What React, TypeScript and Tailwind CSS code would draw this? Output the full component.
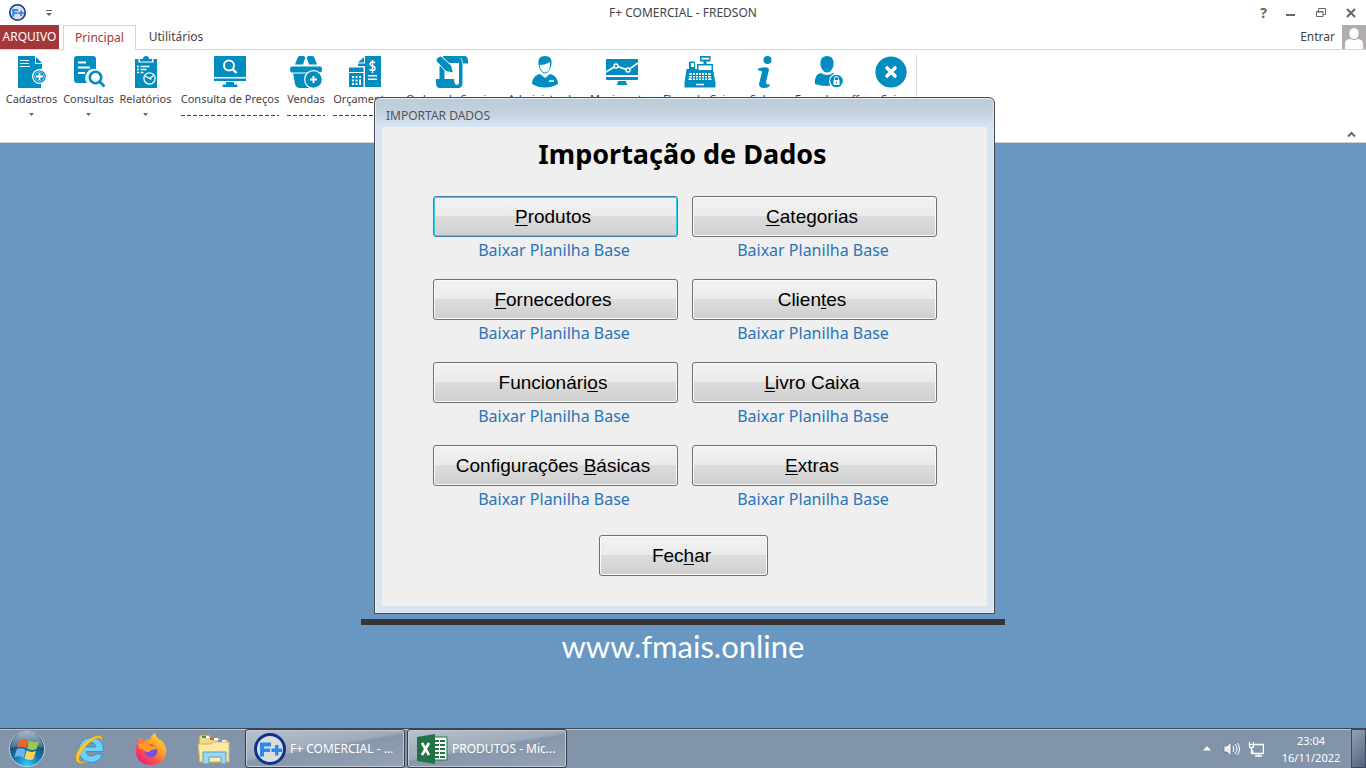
import type { ReactNode } from 'react';

const BLUE = '#028dc0';

function Icon({ children }: { children: ReactNode }) {
  return (
    <svg viewBox="0 0 32 32" className="size-8 shrink-0" fill={BLUE} aria-hidden="true">
      {children}
    </svg>
  );
}

const icons = {
  register: (
    <Icon>
      <path d="M2 0h17v8h7v4.500a7 7 0 0 0-1 13.500V32H2z" />
      <path d="M20 1l6 6h-6z" />
      <path d="M4 4.500h9M4 7.500h9M4 10.500h10" stroke="#fff" />
      <circle cx="23.500" cy="20.500" r="7.500" fill="#fff" />
      <circle cx="23.500" cy="20.500" r="6.300" />
      <circle cx="23.500" cy="20.500" r="4.700" fill="none" stroke="#fff" strokeWidth=".6" />
      <path d="M23.500 17v7M20 20.500h7" stroke="#fff" strokeWidth="1.800" />
    </Icon>
  ),
  search: (
    <Icon>
      <path d="M4 0h16q3 0 3 3v10a9 9 0 0 0-9 14H4q-3 0-3-3V3q0-3 3-3z" />
      <path d="M5 6.500h8M5 11.500h12M5 17h7" stroke="#fff" strokeWidth="2" />
      <circle cx="22.500" cy="21.500" r="8.500" fill="#fff" />
      <circle cx="22.500" cy="21.500" r="5.700" fill="none" stroke={BLUE} strokeWidth="2.600" />
      <path d="M26.500 25.500l5 5" stroke={BLUE} strokeWidth="3" />
    </Icon>
  ),
  report: (
    <Icon>
      <path d="M5 3h3.500v3.500h15V3H27v29H5z" />
      <path d="M10 5.500V3h3q0-3 3-3t3 3h3v2.500z" />
      <path d="M7 10.500h2M7 13.500h2M7 16.500h2M10.500 10.500h9M10.500 13.500h6M10.500 16.500h3" stroke="#fff" strokeWidth="1.400" />
      <circle cx="19.500" cy="22.500" r="5.600" fill={BLUE} stroke="#fff" strokeWidth="1.300" />
      <path d="M15 20l4.500 2.500 4-3M19.500 22.500l2 .5" stroke="#fff" fill="none" strokeWidth="1.300" />
    </Icon>
  ),
  monitor: (
    <Icon>
      <path d="M1 0h30q1 0 1 1v20H0V1q0-1 1-1zM0 22.500h32V25H0zM12 26h8v2.500h3q.5 0 .5 2.500h-15q0-2.500.5-2.500h3z" />
      <circle cx="15" cy="9.500" r="5" fill="none" stroke="#fff" strokeWidth="2" />
      <path d="M18.500 13l4 4" stroke="#fff" strokeWidth="2.400" />
    </Icon>
  ),
  basket: (
    <Icon>
      <path d="M9.500 0H13q2.500 0 2 2.500L13 8.500H5L7.500 2Q8 0 9.500 0zM22.500 0H19q-2.500 0-2 2.500l2 6h8L24.500 2Q24 0 22.500 0z" />
      <path d="M2 10.500h28q2 0 2 3t-2 3H2q-2 0-2-3t2-3z" />
      <path d="M3 17.500h26V32H10q-4 0-5-4z" />
      <circle cx="23.500" cy="23.500" r="9.500" fill="#fff" />
      <circle cx="23.500" cy="23.500" r="8.300" />
      <path d="M23.500 20v7M20 23.500h7" stroke="#fff" strokeWidth="2" />
    </Icon>
  ),
  budget: (
    <Icon>
      <path d="M16 0h16v31H16V10H9V7.500h7zM9 6.500L15 1v5.500zM0 11.500h14.500V16H0zM0 17h14.500v14H0z" />
      <path d="M3 20h2v2H3zM6.500 20h2v2h-2zM10 20h2v2h-2zM3 23.500h2v2H3zM6.500 23.500h2v2h-2zM10 23.500h2v5.500h-2zM3 27h2v2H3zM6.500 27h2v2h-2zM19 19h9v1.500h-9zM19 22.500h9V24h-9z" fill="#fff" />
      <path d="M26 7q-1-1.500-2.800-1.200T21 8q0 1.500 2.500 2t2.500 2.500-2.500 2T20.700 13M23.500 4v13" fill="none" stroke="#fff" strokeWidth="1.400" />
    </Icon>
  ),
  scroll: (
    <Icon>
      <path d="M7 0h21q4 0 4 5v2.500h-5.500V27q0 5-4.500 5H4q-4 0-4-5v-4h3.500V10h5v13H18q0 5 2.500 6 2.500 0 2.500-3V7H7z" />
      <path d="M24.500 2Q26.500 3 26.500 7.500" fill="none" stroke="#fff" strokeWidth=".7" />
      <path d="M0 5q0-4 5-5l10.500 9.500 2 7.500-7.500-1.500z" stroke="#fff" strokeWidth="1" />
    </Icon>
  ),
  user: (
    <Icon>
      <path d="M16 0c5 0 7 3 6.500 7.500C22 13 19 17.500 16 17.500S10 13 9.500 7.500C9 3 11 0 16 0z" />
      <path d="M10.700 9q6 0 10-3 1 6-1.500 9-3.200 3-6.200 0-2.300-3-2.300-6z" fill="#fff" />
      <path d="M11 18l5 4 5-4c5 1 8 5 8 10q-6 3.500-13 3.500T3 28c0-5 3-9 8-10z" />
      <path d="M20 25h5" stroke="#fff" strokeWidth="1.500" />
    </Icon>
  ),
  chart: (
    <Icon>
      <path d="M1 3h30q1 0 1 1v15H0V4q0-1 1-1zM0 21h32v2q0 1-1 1H1q-1 0-1-1zM12 25h8q0 3 2 4H10q2-1 2-4z" />
      <path d="M0 16l10-6 12 4 10-7" fill="none" stroke="#fff" strokeWidth="1.600" />
      <circle cx="10" cy="10" r="2" stroke="#fff" strokeWidth="1.400" />
      <circle cx="22" cy="14" r="2" stroke="#fff" strokeWidth="1.400" />
    </Icon>
  ),
  cashier: (
    <Icon>
      <path d="M2.500 13H5V6.500q0-1 1-1h4q1 0 1 1V13h2V8h16v5.500L31.500 27v4.500H.5V27zM16 0h10.500v5.500H22.500V8h-3V5.500H16z" />
      <path d="M17.500 1.800h7.500v1.700h-7.500zM14.500 9.500h13V14h-13z" fill="#fff" />
      <path d="M5.500 17h21l1 7h-23zM7 7h3v4H7z" fill="#fff" />
      <path d="M8.500 17v7M11.500 17v7M14.500 17v7M17.500 17v7M20.500 17v7M23.500 17v7M5 19.500h22M5 22h22" fill="none" stroke={BLUE} strokeWidth="1" />
      <path d="M12 28.500h8" stroke="#fff" strokeWidth="1.500" />
    </Icon>
  ),
  info: (
    <Icon>
      <circle cx="18.500" cy="4" r="4" />
      <path d="M9 12.500q10-3 11 1l-3 13q0 3 4 1.500 0 4-6 4-5 0-5-4l3-12q0-2-4-1.500z" />
    </Icon>
  ),
  lock: (
    <Icon>
      <path d="M16 0c5 0 7 4 6.500 8.500S19 16.500 16 16.500 10 13 9.500 8.500 11 0 16 0z" />
      <path d="M10 17q6 4 12 0l7 5v5q-6 3-13 3T4 28q-1-10 6-11z" />
      <circle cx="25.500" cy="25" r="7.500" fill="#fff" />
      <circle cx="25.500" cy="25" r="6.300" />
      <path d="M22.500 24h6v5h-6z" fill="#fff" />
      <path d="M23.500 24v-1.500a2 2 0 0 1 4 0V24" fill="none" stroke="#fff" />
      <path d="M25.500 25.500v2" stroke={BLUE} />
    </Icon>
  ),
  close: (
    <Icon>
      <circle cx="16" cy="16" r="15.600" />
      <path d="M12 12l8 8M20 12l-8 8" stroke="#fff" strokeWidth="3.600" strokeLinecap="round" />
    </Icon>
  ),
};

type Tool = { label: string; width: string; icon: ReactNode; mark?: 'arrow' | 'dash' };

const tools: Tool[] = [
  { label: 'Cadastros', width: 'w-[57px]', icon: icons.register, mark: 'arrow' },
  { label: 'Consultas', width: 'w-[57px]', icon: icons.search, mark: 'arrow' },
  { label: 'Relatórios', width: 'w-[57px]', icon: icons.report, mark: 'arrow' },
  { label: 'Consulta de Preços', width: 'w-28', icon: icons.monitor, mark: 'dash' },
  { label: 'Vendas', width: 'w-10', icon: icons.basket, mark: 'dash' },
  { label: 'Orçamentos', width: 'w-[78px]', icon: icons.budget, mark: 'dash' },
  { label: 'Ordem de Serviço', width: 'w-24', icon: icons.scroll },
  { label: 'Administrador', width: 'w-[90px]', icon: icons.user },
  { label: 'Movimentos', width: 'w-16', icon: icons.chart },
  { label: 'Fluxo de Caixa', width: 'w-[92px]', icon: icons.cashier },
  { label: 'Sobre', width: 'w-[38px]', icon: icons.info },
  { label: 'Fazer Logoff', width: 'w-[86px]', icon: icons.lock },
  { label: 'Sair', width: 'w-[42px]', icon: icons.close },
];

function Logo({ className }: { className: string }) {
  return (
    <svg viewBox="0 0 32 32" className={className} aria-hidden="true">
      <circle cx="16" cy="16" r="14.500" fill="#dcdde0" stroke="#0c3391" strokeWidth="3" />
      <path d="M6 9.500h11v4h-7v2h6V19h-6v4.500H6zM21 12h3.500v3.500H28V19h-3.500v3.500H21V19h-3.500v-3.500H21z" fill="#2c8be8" />
    </svg>
  );
}

function WinButton({ text, mnemonic, focused, className }: { text: string; mnemonic: number; focused?: boolean; className: string }) {
  const frame = focused
    ? 'border-[#3c7fb1] shadow-[inset_0_0_0_1px_#35d0f5]'
    : 'border-[#707070] shadow-[inset_0_0_0_1px_#fafafa]';
  return (
    <button
      type="button"
      className={`h-[41px] rounded-[3px] border bg-[linear-gradient(#f2f2f2,#ebebeb_48%,#dddddd_48%,#cfcfcf)] pr-1 font-['Liberation_Sans',Arial,sans-serif] text-[19px] leading-6 text-black ${frame} ${className}`}
    >
      {text.slice(0, mnemonic)}
      <span className="underline decoration-1 underline-offset-2">{text[mnemonic]}</span>
      {text.slice(mnemonic + 1)}
    </button>
  );
}

const imports: [string, number][] = [
  ['Produtos', 0],
  ['Categorias', 0],
  ['Fornecedores', 0],
  ['Clientes', 5],
  ['Funcionários', 10],
  ['Livro Caixa', 0],
  ['Configurações Básicas', 14],
  ['Extras', 0],
];

function ImportDialog() {
  return (
    <div role="dialog" aria-labelledby="dialog-title" className="w-[621px] rounded-t-md border border-[#45484b] bg-[#d7e4f2] bg-[linear-gradient(#bccbdb,#c4d0dc_14px,#d7e4f2_29px)] px-[7px] pb-[7px] shadow-[inset_0_0_0_1px_#e6eef7]">
      <div id="dialog-title" className="flex h-[29px] items-center px-1 pt-1.5 text-[12px] text-[#4c5560]">IMPORTAR DADOS</div>
      <div className="flex flex-col items-center bg-[#efefef] pt-[9px] pb-[30px]">
        <h1 className="pr-1 text-[27px] leading-9 font-bold text-black">Importação de Dados</h1>
        <div className="mt-6 grid grid-cols-2 gap-x-3.5">
          {imports.map(([text, mnemonic], i) => (
            <div key={text} className="flex h-[83px] flex-col items-center">
              <WinButton text={text} mnemonic={mnemonic} focused={i === 0} className="w-[245px]" />
              <a href="#planilha" className="pr-0.5 text-[16px] leading-[26px] text-[#2b73b9]">Baixar Planilha Base</a>
            </div>
          ))}
        </div>
        <WinButton text="Fechar" mnemonic={3} className="mt-[7px] mr-0.5 w-[169px]" />
      </div>
    </div>
  );
}

function Ribbon() {
  return (
    <header className="bg-white text-[#444]">
      <div className="grid h-[25px] grid-cols-3 items-center">
        <div className="flex items-center gap-5 pl-[9px]">
          <Logo className="size-[17px]" />
          <button type="button" aria-label="Personalizar">
            <svg viewBox="0 0 6 6" className="size-1.5" fill="#666"><path d="M0 0h6v1H0zM0 3h6L3 6z" /></svg>
          </button>
        </div>
        <div className="text-center text-[12px]">F+ COMERCIAL - FREDSON</div>
        <div className="flex items-center justify-end gap-[18px] pr-[9px]">
          <button type="button" aria-label="Ajuda" className="text-[14px] leading-4 font-bold text-[#666]">?</button>
          <button type="button" aria-label="Minimizar"><svg viewBox="0 0 12 12" className="size-3"><path d="M1 7h9v2H1z" fill="#666" /></svg></button>
          <button type="button" aria-label="Restaurar"><svg viewBox="0 0 12 12" className="size-3" fill="none" stroke="#666"><path d="M3.500 4V1.500h7v6H8M1.500 4.500H8v5H1.500zM1 5h7" /></svg></button>
          <button type="button" aria-label="Fechar janela"><svg viewBox="0 0 12 12" className="size-3"><path d="M2 2l8 8M10 2l-8 8" stroke="#666" strokeWidth="2" /></svg></button>
        </div>
      </div>
      <nav className="flex h-[25px] items-stretch border-b border-[#d4d4d4] text-[12px]">
        <button type="button" className="w-[59px] bg-[#a4373a] text-white">ARQUIVO</button>
        <button type="button" className="-mb-px ml-1 w-[73px] border border-b-0 border-[#d4d4d4] bg-white text-[#a4373a]">Principal</button>
        <button type="button" className="w-20">Utilitários</button>
        <button type="button" className="ml-auto flex items-center gap-[7px]">
          Entrar
          <svg viewBox="0 0 24 24" className="size-6" aria-hidden="true">
            <path d="M0 0h24v24H0z" fill="#b1adad" />
            <ellipse cx="12" cy="8.500" rx="4.700" ry="5.500" fill="#fff" />
            <path d="M3 24v-5q0-5 6-5 3 2.500 6 0 6 0 6 5v5z" fill="#fff" />
          </svg>
        </button>
      </nav>
      <div className="flex h-[93px] items-stretch border-b border-[#d4d4d4] pl-[3px]">
        {tools.map((tool) => (
          <button key={tool.label} type="button" className={`flex shrink-0 flex-col items-center pt-1.5 text-[11px] leading-4 whitespace-nowrap ${tool.width}`}>
            {tool.icon}
            <span className="mt-[3px] flex flex-col items-stretch">
              {tool.label}
              {tool.mark === 'dash' && (
                <span className="mt-2 h-px bg-[repeating-linear-gradient(90deg,#444_0_4px,transparent_4px_6px)]" />
              )}
            </span>
            {tool.mark === 'arrow' && (
              <svg viewBox="0 0 5 3" className="mt-1.5 h-[3px] w-[5px]" fill="#666"><path d="M0 0h5L2.500 3z" /></svg>
            )}
          </button>
        ))}
        <div className="mt-1 mb-2 ml-1 w-px bg-[#dcdcdc]" />
        <button type="button" aria-label="Recolher faixa" className="mt-auto mr-[10px] mb-1 ml-auto">
          <svg viewBox="0 0 9 7" className="h-[7px] w-[9px]"><path d="M1 5.500L4.500 2 8 5.500" fill="none" stroke="#666" strokeWidth="2" /></svg>
        </button>
      </div>
    </header>
  );
}

function Task({ icon, label }: { icon: ReactNode; label: string }) {
  return (
    <button type="button" className="flex h-[39px] w-40 items-center gap-1 rounded-[3px] border border-[#343f4c] bg-[linear-gradient(170deg,#bac3ce,#9eabba_45%,#8797aa_50%,#94a3b5)] pl-2 text-[12px] text-white shadow-[inset_0_0_0_1px_#c3ccd6]">
      {icon}
      {label}
    </button>
  );
}

function Taskbar() {
  return (
    <footer className="flex h-10 items-center border-t border-[#3d4854] bg-[#8294aa] text-white shadow-[inset_0_1px_0_#b9c8d6]">
      <button type="button" aria-label="Iniciar" className="ml-2">
        <svg viewBox="0 0 38 38" className="size-[38px]">
          <defs>
            <radialGradient id="orb" cx=".5" cy=".95" r=".85">
              <stop offset="0" stopColor="#25d1ff" /><stop offset=".45" stopColor="#1674ac" /><stop offset="1" stopColor="#143653" />
            </radialGradient>
            <linearGradient id="gloss" x2="0" y2="1"><stop stopColor="#d4e2ea" /><stop offset="1" stopColor="#547892" /></linearGradient>
          </defs>
          <circle cx="19" cy="19" r="17.500" fill="url(#orb)" stroke="#b5d5e6" />
          <path d="M3 18a16 16 0 0 1 32 0q-16-6-32 0z" fill="url(#gloss)" opacity=".75" />
          <path d="M11 11q4-4 9-1l-2 8.500q-4-3-9-.5z" fill="#eb6530" />
          <path d="M21 10.500q5 3 10 .5l-2.500 8q-5 2-9.500-.5z" fill="#9dc94c" />
          <path d="M8.500 19.500q5-2.500 9 .5l-2 8q-4-3-9-.5z" fill="#69b5ec" />
          <path d="M18.500 20.500q5 2.500 9.500.5l-2.500 8q-4.500 2-9-.5z" fill="#ffd35b" />
        </svg>
      </button>
      <button type="button" aria-label="Internet Explorer" className="ml-7">
        <svg viewBox="0 0 32 32" className="size-8">
          <path d="M17 4.500A11.500 11.500 0 0 1 29 18.500H12q1 4.500 5.500 4.500 3 0 4.500-2h6.500q-3 8.500-11.500 8.500a12.500 12.500 0 0 1 0-25zM12 14h10q-.5-4.500-5-4.500T12 14z" fill="#6fd0f8" stroke="#298fd0" strokeWidth=".9" />
          <path d="M27.500 9.500q2.500-8-5-6.500C13 5 1 17 2 26c1 7 9 4 12 1-5 2.500-9 3-9-1C6 18 17 6 24 5q4.500 0 3.500 4.500z" fill="#ffc62e" stroke="#d99513" strokeWidth=".5" />
        </svg>
      </button>
      <button type="button" aria-label="Firefox" className="ml-[29px]">
        <svg viewBox="0 0 32 32" className="size-8">
          <defs><linearGradient id="fox" x1="1" x2=".2" y2="1"><stop stopColor="#fff04b" /><stop offset=".45" stopColor="#ff9a27" /><stop offset=".75" stopColor="#ff4657" /><stop offset="1" stopColor="#e51b76" /></linearGradient></defs>
          <path d="M20 0q2 6 7 8 5 6 4 12-2 12-15 12T1 20Q0 13 3 9l1-5 5 4q3-2 6-2 1-4 5-6z" fill="url(#fox)" />
          <circle cx="16" cy="18" r="6.500" fill="#7651dc" />
          <path d="M3 11q8-3 13 2 5-1 6 3l-6 1q-2 4-6 1-2-3-5-2z" fill="#ff9c24" />
        </svg>
      </button>
      <button type="button" aria-label="Explorador de Arquivos" className="ml-[30px]">
        <svg viewBox="0 0 34 32" className="h-8 w-[34px]">
          <path d="M2 4q0-2 2-2h8l2 3h8l1 2h8v22H2z" fill="#efd68a" stroke="#b89243" />
          <path d="M5 3h4v2H5z" fill="#24a339" /><path d="M13 5h4v2h-4z" fill="#d95b28" /><path d="M21 7h4v2h-4z" fill="#3598df" />
          <path d="M9 3h3v2H9zM17 5h4v2h-4zM25 7h4v2h-4z" fill="#fff" />
          <path d="M1 11h13l2-2h16v20H3z" fill="#fae9ab" stroke="#d7b55e" />
          <path d="M6 31V19h23v12h-5v-7H12v7z" fill="#9dd6ed" stroke="#579fc4" />
        </svg>
      </button>
      <div className="ml-3.5 flex gap-0.5">
        <Task icon={<Logo className="size-8 shrink-0" />} label="F+ COMERCIAL - ..." />
        <Task
          icon={
            <svg viewBox="0 0 32 32" className="size-8 shrink-0" aria-hidden="true">
              <path d="M16 4h15v23H16z" fill="#fff" stroke="#217346" />
              <path d="M19 7h4v2h-4zM24 7h5v2h-5zM19 11h4v2h-4zM24 11h5v2h-5zM19 15h4v2h-4zM24 15h5v2h-5zM19 19h4v2h-4zM24 19h5v2h-5zM19 23h4v2h-4zM24 23h5v2h-5z" fill="#217346" />
              <path d="M1 4l18-3v30L1 28z" fill="#217346" />
              <path d="M6 10l7 12M13 10L6 22" stroke="#fff" strokeWidth="2.600" />
            </svg>
          }
          label="PRODUTOS - Mic..."
        />
      </div>
      <div className="ml-auto flex items-center">
        <button type="button" aria-label="Ícones ocultos"><svg viewBox="0 0 8 5" className="h-[5px] w-2" fill="#fff"><path d="M0 4.500L4 0l4 4.500z" /></svg></button>
        <button type="button" aria-label="Volume" className="ml-3">
          <svg viewBox="0 0 17 16" className="h-4 w-[17px]"><path d="M1 5h3l4-4v14l-4-4H1z" fill="#eee" stroke="#53606e" strokeWidth=".6" /><path d="M10 5q2 3 0 6M12 3q4 5 0 10M14.500 2q4 6 0 12" fill="none" stroke="#fff" /></svg>
        </button>
        <button type="button" aria-label="Rede" className="ml-2">
          <svg viewBox="0 0 16 16" className="size-4" fill="none" stroke="#fff"><path d="M6 3.500h9.500v9H4.500V9M7 15h7M10.500 13v2" strokeWidth="1.500" /><path d="M1.500 1v4q0 2 2 2t2-2V1M1 3.500h5M3.500 7v6" strokeWidth="1.300" /></svg>
        </button>
        <div className="ml-3.5 w-[66px] text-center text-[11px] leading-[17px]">23:04<br />16/11/2022</div>
        <button type="button" aria-label="Mostrar área de trabalho" className="ml-[7px] h-[39px] w-[15px] border border-[#3e4b5b] bg-[linear-gradient(135deg,#93a2b3,#53657c)]" />
      </div>
    </footer>
  );
}

export default function App() {
  return (
    <div className="relative flex min-h-screen flex-col overflow-hidden bg-[#6897c1] font-['Noto_Sans','Segoe_UI',sans-serif]">
      <Ribbon />
      <main className="flex flex-1 flex-col items-center justify-end pb-[62px]">
        <div className="h-1.5 w-[644px] bg-[#353535]" />
        <a href="#site" className="mt-px font-['Lato',Calibri,sans-serif] text-[31px] leading-10 text-white">www.fmais.online</a>
      </main>
      <Taskbar />
      <div className="absolute inset-x-0 top-[97px] flex justify-center pl-[3px]">
        <ImportDialog />
      </div>
    </div>
  );
}
